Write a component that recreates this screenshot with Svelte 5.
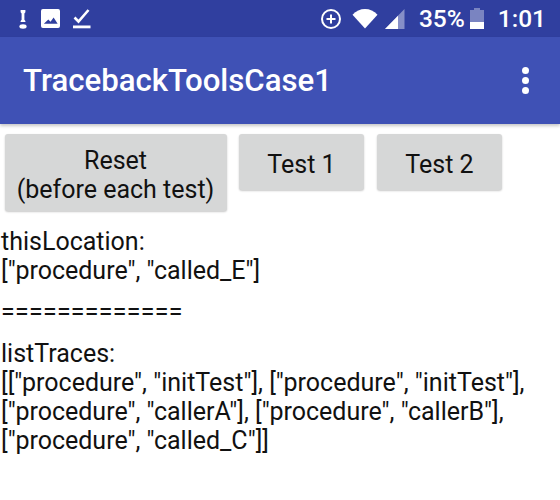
<script>
    const output = [
        { id: "location", lines: ["thisLocation:", '["procedure", "called_E"]'] },
        { id: "divider", lines: ["============="] },
        {
            id: "traces",
            lines: [
                "listTraces:",
                '[["procedure", "initTest"], ["procedure", "initTest"],',
                '["procedure", "callerA"], ["procedure", "callerB"],',
                '["procedure", "called_C"]]',
            ],
        },
    ];
</script>

<div class="screen">
    <div class="status-bar">
        <div class="status-left">
            <svg class="ic-alert" viewBox="0 0 10 24" width="10" height="24">
                <path d="M2.6 3h4.8v2.2L6.4 6.4v6.4l1 1.2v1H2.6v-1l1-1.2V6.4L2.6 5.2z" fill="#fff" />
                <ellipse cx="5" cy="19.5" rx="3.6" ry="2.2" fill="#fff" />
            </svg>
            <svg viewBox="0 0 20 20" width="19" height="19">
                <path
                    fill="#fff"
                    fill-rule="evenodd"
                    d="M2 0h16a2 2 0 0 1 2 2v16a2 2 0 0 1-2 2H2a2 2 0 0 1-2-2V2a2 2 0 0 1 2-2zM3 15.5h14.5l-4.2-6.5-3.3 4.5-2.3-2.4z"
                />
            </svg>
            <svg viewBox="0 0 18 20" width="18" height="20">
                <path d="M1.5 8.5l4 4L15.5 1" fill="none" stroke="#fff" stroke-width="2.6" />
                <rect x="0" y="16.5" width="17.5" height="2.8" fill="#fff" />
            </svg>
        </div>
        <div class="status-right">
            <svg class="ic-saver" viewBox="0 0 22 22" width="22" height="22">
                <circle cx="11" cy="11" r="9" fill="none" stroke="#fff" stroke-width="2" />
                <path d="M11 6.5v9M6.5 11h9" stroke="#fff" stroke-width="2" />
            </svg>
            <svg class="ic-wifi" viewBox="0 0 26 21" width="26" height="21">
                <path d="M13 20.5L0.5 6.8C4 3 8.3 1 13 1s9 2 12.5 5.8z" fill="#fff" />
            </svg>
            <svg class="ic-signal" viewBox="0 0 20 20" width="20" height="20">
                <path d="M0 20L19.5 0v20z" fill="#fff" fill-opacity="0.42" />
                <path d="M0 20L13 6.7V20z" fill="#fff" />
            </svg>
            <span class="battery-text">35%</span>
            <svg class="ic-battery" viewBox="0 0 14 21" width="14" height="21">
                <path d="M0 2h4V0h6v2h4v12H0z" fill="#fff" fill-opacity="0.36" />
                <rect x="0" y="14" width="14" height="7" fill="#fff" />
            </svg>
            <span class="clock">1:01</span>
        </div>
    </div>

    <header class="app-bar">
        <h1>TracebackToolsCase1</h1>
        <div class="overflow">
            <span></span>
            <span></span>
            <span></span>
        </div>
    </header>

    <main class="content">
        <div class="buttons">
            <button class="reset">Reset<br />(before each test)</button>
            <button class="test">Test 1</button>
            <button class="test">Test 2</button>
        </div>

        {#each output as block (block.id)}
            <p class={block.id}>
                {#each block.lines as line}
                    {line}<br />
                {/each}
            </p>
        {/each}
    </main>
</div>

<style>
    :global(body) {
        margin: 0;
        background: #fff;
    }

    .screen {
        width: 560px;
        height: 500px;
        overflow: hidden;
        font-family: Roboto, "Liberation Sans", sans-serif;
        color: #111;
    }

    .status-bar {
        height: 37px;
        background: #303f9f;
        color: #fff;
        display: flex;
        justify-content: space-between;
        align-items: center;
        padding: 0 14px 0 18px;
    }

    .status-left,
    .status-right {
        display: flex;
        align-items: center;
    }

    .status-left {
        gap: 13px;
    }

    .status-right {
        font-size: 24.5px;
        font-weight: 500;
    }

    .ic-wifi {
        margin-left: 10px;
    }

    .ic-signal {
        margin-left: 7px;
    }

    .battery-text {
        margin-left: 14px;
    }

    .ic-battery {
        margin-left: 5px;
    }

    .clock {
        margin-left: 14px;
    }

    .app-bar {
        height: 87px;
        background: #3f51b5;
        display: flex;
        justify-content: space-between;
        align-items: center;
        padding: 0 31px 0 23px;
        box-shadow: 0 2px 3px rgba(0, 0, 0, 0.22);
    }

    h1 {
        margin: 0;
        font-size: 31.2px;
        font-weight: 500;
        color: #fff;
    }

    .overflow {
        display: flex;
        flex-direction: column;
        gap: 3px;
    }

    .overflow span {
        width: 7px;
        height: 7px;
        border-radius: 50%;
        background: #fff;
    }

    .content {
        padding: 10px 0 0 1px;
    }

    .buttons {
        display: flex;
        align-items: flex-start;
        padding-left: 3.5px;
        margin-bottom: 16px;
    }

    button {
        border: none;
        border-radius: 3px;
        background: #d6d7d7;
        box-shadow: 0 1px 2px rgba(0, 0, 0, 0.22);
        font-family: inherit;
        font-size: 25px;
        line-height: 29px;
        color: #111;
        padding: 4px 0 0;
    }

    .reset {
        width: 222px;
        height: 77px;
    }

    .test {
        width: 125px;
        height: 56px;
        margin-left: 13px;
        padding-left: 1px;
    }

    .reset + .test {
        margin-left: 12px;
    }

    p {
        margin: 0 0 12px;
        font-size: 25px;
        line-height: 29px;
        white-space: nowrap;
    }

    .divider {
        margin-bottom: 13px;
        letter-spacing: 0.25px;
    }
</style>
